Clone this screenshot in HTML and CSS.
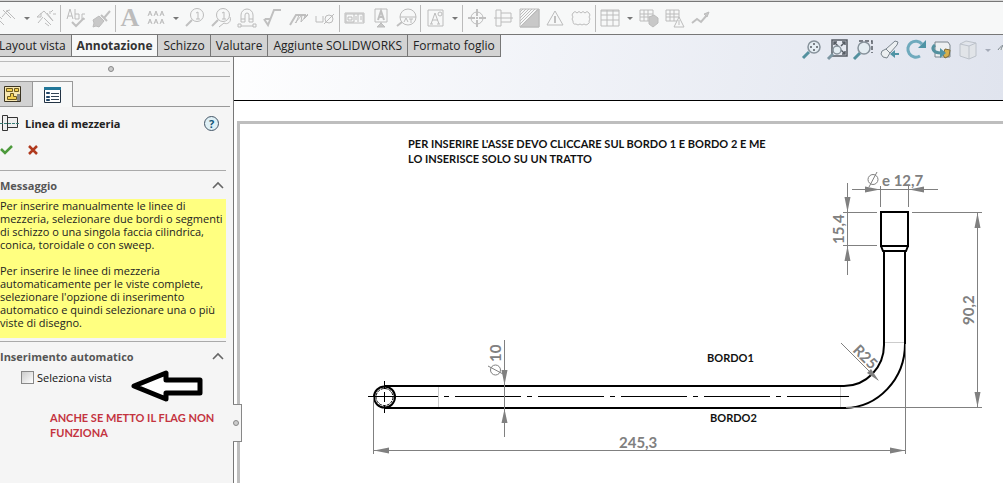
FILE: index.html
```html
<!DOCTYPE html>
<html lang="it">
<head>
<meta charset="utf-8">
<title>Linea di mezzeria</title>
<link rel="stylesheet" href="styles.css">
</head>
<body>
<header class="toolbar">
  <button class="tool" aria-label="Quota"><svg viewBox="0 0 26 26"><path d="M3 9l5 5M8 12l5-6 8 8M9 5l8 8M12 6l4-1M4 14l6 6"/></svg></button>
  <button class="more" aria-label="Altre quote"></button>
  <button class="tool" aria-label="Quota automatica"><svg viewBox="0 0 26 26"><path d="M4 12l7-6 9 10M4 12h4v-4M11 13l7 7M14 8l6 8M17 6v3M20 9h3M20 5l-2 2M10 12l-5 6M12 18l4 3"/></svg></button>
  <span class="sep"></span>
  <button class="tool" aria-label="Controllo ortografico"><svg viewBox="0 0 26 26"><path d="M5 14l3-10 3 10M6 11h4M13 4v10M13 9h4v5h-4M23 9h-3v5h3" /><path class="bold" d="M10 17l4 4 8-8"/></svg></button>
  <button class="tool" aria-label="Copia formato"><svg viewBox="0 0 26 26"><path class="fill" d="M5 15l6-4 5 5-5 6-3-1-3 1 1-4z"/><path class="bold" d="M13 10l6 6M16 13l6-7"/></svg></button>
  <span class="sep"></span>
  <button class="tool letter" aria-label="Nota">A</button>
  <button class="tool" aria-label="Serie di note"><svg viewBox="0 0 26 26"><path d="M5 11l2-5 2 5M6 9h2M11 11l2-5 2 5M12 9h2M17 11l2-5 2 5M18 9h2M5 19l2-5 2 5M6 17h2M11 19l2-5 2 5M12 17h2M17 19l2-5 2 5M18 17h2"/></svg></button>
  <button class="more" aria-label="Altre note"></button>
  <button class="tool" aria-label="Bollatura"><svg viewBox="0 0 26 26"><circle cx="15" cy="10" r="6.5"/><path d="M14 8l2-1v7M14 14h4"/><path class="bold" d="M10 15l-6 6"/></svg></button>
  <button class="tool" aria-label="Bollatura automatica"><svg viewBox="0 0 26 26"><circle cx="15" cy="10" r="6.5"/><path d="M14 8l2-1v7M14 14h4M22 12c2 5-3 8-6 6l-5 4"/><path class="bold" d="M10 15l-6 6"/></svg></button>
  <button class="tool" aria-label="Linea magnetica"><svg viewBox="0 0 26 26"><path d="M7 17V10a6 6 0 0 1 12 0v7h-4v-7a2 2 0 0 0-4 0v7zM7 14h4M15 14h4"/><path d="M7 21h12M4 19h3v3H4zM19 19h3v3h-3z"/></svg></button>
  <button class="tool" aria-label="Finitura superficie"><svg viewBox="0 0 26 26"><path class="bold" d="M4 14l4 6 6-15h7M5 14h5"/></svg></button>
  <button class="tool" aria-label="Saldatura"><svg viewBox="0 0 26 26"><path class="bold" d="M4 20l6-10h10"/><path d="M9 18l7-8-1 7 6-7 1-1M13 10l-3 8M19 10l-1 4 4-4"/></svg></button>
  <button class="tool" aria-label="Didascalia foro"><svg viewBox="0 0 26 26"><path d="M4 11v6h7v-6"/><circle cx="17" cy="14" r="4"/><path d="M12 19L22 9"/></svg></button>
  <span class="sep"></span>
  <button class="tool" aria-label="Tolleranza geometrica"><svg viewBox="0 0 26 26"><path d="M4 8h19v10H4zM5 9h8v8H5zM13 9h9v8M17 9v8M7 12h4v3H7zM15 11v4M20 11v4"/></svg></button>
  <button class="tool" aria-label="Riferimento"><svg viewBox="0 0 26 26"><path d="M8 4h12v13H8zM14 17v3"/><path class="bold" d="M11 15l3-9 3 9M12 12h4"/><path class="fill" d="M10 22l4-4 4 4z"/></svg></button>
  <button class="tool" aria-label="Riferimento destinazione"><svg viewBox="0 0 26 26"><circle cx="15" cy="12" r="8"/><path d="M7 12h16M11 17l2-4 2 4M16 14h4M18 14v4"/><path class="bold" d="M9 17l-5 4"/></svg></button>
  <span class="sep"></span>
  <button class="tool" aria-label="Blocco"><svg viewBox="0 0 26 26"><path d="M6 5h15v16H6zM9 19l4-11 4 11M10 15h6M8 19h3M15 19h3"/><circle cx="18" cy="9" r="2"/></svg></button>
  <button class="more" aria-label="Altri blocchi"></button>
  <span class="sep"></span>
  <button class="tool" aria-label="Centro"><svg viewBox="0 0 26 26"><circle cx="13" cy="13" r="6"/><path class="bold" d="M13 4v7M13 15v7M4 13h7M15 13h7M12 13h2"/></svg></button>
  <button class="tool" aria-label="Linea di mezzeria"><svg viewBox="0 0 26 26"><path d="M6 5h5v16H6zM11 8h10v9H11M4 13h19"/></svg></button>
  <button class="tool" aria-label="Tratteggio"><svg viewBox="0 0 26 26"><path class="fill" d="M4 22L23 4v18z"/><path d="M4 4h19v18H4zM4 7l3-3M4 10l6-6M4 13l9-9M4 16L16 4M4 19L19 4M4 22L22 4"/></svg></button>
  <button class="tool" aria-label="Revisione"><svg viewBox="0 0 26 26"><path d="M13 6l8 14H5z"/><path class="bold" d="M13 11v7"/></svg></button>
  <button class="tool" aria-label="Nuvola di revisione"><svg viewBox="0 0 26 26"><path d="M5 8q2-3 4 0q2-3 4 0q2-3 4 0q2-3 4 0q2 2 0 4q2 2 0 4q1 2-1 3q-2 2-4 0q-2 2-4 0q-2 2-4 0q-3 1-3-3q-2-2 0-4q-2-2 0-4z"/></svg></button>
  <span class="sep"></span>
  <button class="tool" aria-label="Tabella"><svg viewBox="0 0 26 26"><path d="M4 5h18v16H4zM4 10h18M4 15h18M10 5v16M16 5v16M4 6h18"/></svg></button>
  <button class="more" aria-label="Altre tabelle"></button>
  <button class="tool" aria-label="Tabella fori"><svg viewBox="0 0 26 26"><path d="M4 5h13v11H4zM4 9h13M4 12h13M8 5v11M12 5v11"/><path class="fill" d="M13 12l5-2 4 3v5l-5 4-4-3z"/></svg></button>
  <button class="tool" aria-label="Tabella revisioni"><svg viewBox="0 0 26 26"><path d="M4 5h13v11H4zM4 9h13M4 12h13M8 5v11M12 5v11"/><path class="cut" d="M17 12l5 10H12zM17 15v5"/></svg></button>
  <button class="tool" aria-label="Linea spezzata"><svg viewBox="0 0 26 26"><path class="bold" d="M4 18l5-4 4 3 6-7"/><path class="fill" d="M21 7l-5 2 3 3z"/></svg></button>
</header>

<div class="workspace">
  <div class="strip">
    <nav class="tabs">
      <button class="tab">Layout vista</button>
      <button class="tab active">Annotazione</button>
      <button class="tab">Schizzo</button>
      <button class="tab">Valutare</button>
      <button class="tab">Aggiunte SOLIDWORKS</button>
      <button class="tab">Formato foglio</button>
    </nav>
    <div class="headsup">
      <button class="view-tool" aria-label="Zoom in"><svg viewBox="0 0 26 26"><path class="teal" d="M10 15l-6 6"/><circle class="lens" cx="15" cy="10" r="6"/><path class="ink" d="M15 6v2M15 12v2M11 10h2M17 10h2"/></svg></button>
      <button class="view-tool" aria-label="Zoom adatta"><svg viewBox="0 0 26 26"><path class="ink" d="M7 3h15v16H7zM9 5l4 4M9 8V5h3M20 5l-4 4M17 5h3v3M20 17l-4-4M20 14v3h-3"/><path class="steel" d="M8 17l-5 5"/><circle class="lens" cx="12" cy="13" r="4"/></svg></button>
      <button class="view-tool" aria-label="Zoom area"><svg viewBox="0 0 26 26"><path class="ink dash" d="M8 4h13v12"/><path class="teal" d="M9 16l-6 6"/><circle class="lens" cx="13" cy="11" r="6"/></svg></button>
      <button class="view-tool" aria-label="Vista precedente"><svg viewBox="0 0 26 26"><path class="body" d="M5 14l4-2 9-8 3 1-1 3-7 8-3 5-4-1-2-3zM9 12l4 4"/><path class="teal-fill" d="M13 17l5-4v3h4v2h-4v3z"/></svg></button>
      <button class="view-tool" aria-label="Ruota vista"><svg viewBox="0 0 26 26"><path class="arc" d="M17 19a8 8 0 1 1 2-12"/><path class="teal-fill" d="M23 3v8h-8z"/></svg></button>
      <button class="view-tool" aria-label="Vista 3D"><svg viewBox="0 0 26 26"><path class="body" d="M6 5h13l2 3v12H6z"/><path class="gold" d="M16 12l5 1-1 6-4 2-2-3z"/><path class="teal" d="M6 8c-4 3-2 8 6 8"/><path class="teal-fill" d="M11 11l6 5-6 5z"/></svg></button>
      <button class="view-tool" aria-label="Stile di visualizzazione"><svg viewBox="0 0 26 26"><path class="cube" d="M5 7l6-3 10 2v13l-7 3-9-3zM5 7l9 2 7-3M14 9v13"/></svg></button>
      <button class="more pale" aria-label="Altri stili"></button>
      <button class="view-tool" aria-label="Nascondi"><svg viewBox="0 0 26 26"><path class="body" d="M4 13c4-7 12-7 16 0M7 13a5 5 0 0 1 10 0"/></svg></button>
    </div>
  </div>

  <div class="main">
    <aside class="panel">
      <div class="grip"><span class="dot"></span></div>
      <div class="panel-tabs">
        <button class="panel-tab" aria-label="Albero di disegno"><svg width="20" height="18" viewBox="0 0 20 18"><path class="tree" d="M1.500 1.500h16v15h-16z"/><path class="leaf" d="M3.500 3.500h6v3h-6zM11.500 3.500h4v3h-4zM7.500 8.500h3v3h3v3h-9v-3h3z"/><path d="M14 9h3v7h-3z" fill="#888"/></svg></button>
        <button class="panel-tab current" aria-label="Proprietà"><svg width="20" height="18" viewBox="0 0 20 18"><path d="M1.500 1.500h16v15h-16z" fill="#fff" stroke="#234" /><path d="M1 1h17v3H1z" fill="#279"/><path d="M3.500 6.500h3v1h-3zM3.500 10.500h3v1h-3zM3.500 13.500h3v1h-3z" fill="#3ac" stroke="#246"/><path d="M8 7.500h8M8 10.500h8M8 13.500h8" stroke="#345"/></svg></button>
      </div>
      <div class="title">
        <svg width="20" height="18" viewBox="0 0 20 18"><path d="M2.500 1.500h5v15h-5zM7.500 3.500h10v10h-10" fill="#eee" stroke="#333"/><path d="M0 9.500h19" stroke="#397c75" stroke-dasharray="3 1"/></svg>
        <h1>Linea di mezzeria</h1>
        <button class="help" aria-label="Guida">?</button>
      </div>
      <div class="actions">
        <button aria-label="OK"><svg width="14" height="12" viewBox="0 0 14 12"><path d="M1 5l4 4 7-7" fill="none" stroke="#4d9a3c" stroke-width="2.5"/></svg></button>
        <button aria-label="Annulla"><svg width="14" height="12" viewBox="0 0 14 12"><path d="M3 2l8 8M11 2l-8 8" fill="none" stroke="#b03a1e" stroke-width="2.5"/></svg></button>
      </div>
      <section class="group">
        <h2>Messaggio <button class="fold" aria-label="Comprimi messaggio"><svg width="12" height="8" viewBox="0 0 12 8"><path d="M1 7l5-5 5 5" fill="none" stroke="#666" stroke-width="1.6"/></svg></button></h2>
        <div class="message">
          <p>Per inserire manualmente le linee di<br>mezzeria, selezionare due bordi o segmenti<br>di schizzo o una singola faccia cilindrica,<br>conica, toroidale o con sweep.</p>
          <p>Per inserire le linee di mezzeria<br>automaticamente per le viste complete,<br>selezionare l'opzione di inserimento<br>automatico e quindi selezionare una o più<br>viste di disegno.</p>
        </div>
      </section>
      <section class="group">
        <h2>Inserimento automatico <button class="fold" aria-label="Comprimi inserimento"><svg width="12" height="8" viewBox="0 0 12 8"><path d="M1 7l5-5 5 5" fill="none" stroke="#666" stroke-width="1.6"/></svg></button></h2>
        <div class="option">
          <label><input type="checkbox"> Seleziona vista</label>
          <svg class="pointer" width="73" height="32" viewBox="0 0 73 32"><path d="M3 16L35 3v7h34v13H35v6z" fill="#fff" stroke="#000" stroke-width="5" stroke-linejoin="round"/></svg>
        </div>
        <p class="remark">ANCHE SE METTO IL FLAG NON<br>FUNZIONA</p>
      </section>
      <button class="handle" aria-label="Ridimensiona pannello"><span class="dot"></span></button>
    </aside>

    <main class="view">
      <div class="canvas">
        <div class="sheet">
          <svg class="drawing" width="763" height="359" viewBox="240 124 763 359">
            <g class="note">
              <text x="408" y="148">PER INSERIRE L'ASSE DEVO CLICCARE SUL BORDO 1 E BORDO 2 E ME</text>
              <text x="408" y="163">LO INSERISCE SOLO SU UN TRATTO</text>
              <text x="707" y="362">BORDO1</text>
              <text x="710" y="422">BORDO2</text>
            </g>
            <g class="tangent"><path d="M438.500 387v20M840.500 387v20M885 342.500h20"/></g>
            <g class="edge">
              <path d="M384 386H844A40 41 0 0 0 884 345V251M384 408H845A61 64 0 0 0 905 344V251"/>
              <path d="M881 212H908V246H881ZM881 246l2 5H906l2-5"/>
              <circle cx="384.500" cy="397" r="10.500"/>
            </g>
            <circle class="inner" cx="384.500" cy="397" r="8.500"/>
            <g class="axis">
              <path d="M368 396.500H395M384.500 381V389M384.500 392V402M384.500 405V413"/>
              <path stroke-dasharray="66 6 5 6" d="M372 396.500H849"/>
            </g>
            <g class="dim">
              <path d="M373.500 397V454M905.500 344V454M374 450.500H905"/>
              <path d="M504.500 340V437"/>
              <path d="M912 212.500H982M846 407.500H982M977.500 213V407"/>
              <path d="M843 212.500H877M843 245.500H877M847.500 183V275"/>
              <path d="M852 189.500H938M880.500 186V207M908.500 186V207"/>
              <path d="M841 343L878 380"/>
            </g>
            <g class="heads">
              <path d="M374 450.500l15-3v6zM905 450.500l-15-3v6zM504.500 385l-3-15h6zM504.500 409l-3 14h6zM977.500 213l-3 15h6zM977.500 407l-3-15h6zM847.500 212l-3-15h6zM847.500 246l-3 15h6zM880 189.500l-15-3v6zM909 189.500l15-3v6zM879 381l-12-8 4-4z"/>
            </g>
            <g class="value">
              <text x="619" y="448">245,3</text>
              <text x="882" y="186">e 12,7</text>
              <text transform="translate(844 244) rotate(-90)">15,4</text>
              <text transform="translate(974 325) rotate(-90)">90,2</text>
              <text transform="translate(501 362) rotate(-90)">10</text>
              <text transform="translate(852 351) rotate(45)">R25</text>
            </g>
            <g class="dim">
              <circle cx="873" cy="179.500" r="5"/><path d="M869 187l8-15"/>
              <circle cx="495.500" cy="370" r="5"/><path d="M488 366l15 8"/>
            </g>
          </svg>
        </div>
      </div>
    </main>
  </div>
</div>
</body>
</html>
```
FILE: styles.css
```css
* { box-sizing: border-box; }

body {
  margin: 0;
  padding-top: 1px;
  min-height: 100vh;
  display: flex;
  flex-direction: column;
  overflow: hidden;
  background: #d8d8d8;
  color: #222;
  font-family: "Open Sans", "Noto Sans", sans-serif;
  font-size: 12px;
}

button {
  border: 0;
  padding: 0;
  background: none;
  color: inherit;
  font: inherit;
}

svg { display: block; flex: none; }

.toolbar {
  display: flex;
  align-items: center;
  height: 34px;
  padding-right: 8px;
  margin-left: -6px;
  border-top: 1px solid #777;
  border-bottom: 1px solid #777;
  background: #f7f8f8;
}

.tool { flex: none; width: 26px; height: 26px; }

.tool path, .tool circle { fill: none; stroke: #bcbcbc; }
.tool .bold { stroke-width: 2; stroke: #c0c0c0; }
.tool .fill { fill: #c8c8c8; }
.tool .cut { fill: #f7f8f8; }

.letter {
  color: #bcbcbc;
  font: bold 26px/26px "Liberation Serif", serif;
}

.more { flex: none; width: 13px; height: 26px; }

.more::before {
  content: "";
  display: block;
  margin: 0 auto;
  width: 0;
  border: 3px solid transparent;
  border-top-color: #777;
  border-bottom: 0;
}

.pale::before { border-top-color: #a5abb8; }

.sep {
  flex: none;
  width: 1px;
  height: 27px;
  margin: 0 1px;
  background: #bbb;
}

.workspace {
  flex: 1;
  display: flex;
  flex-direction: column;
  background: linear-gradient(100deg, #fff 20%, #f1f3f8 55%, #e0e4ee 100%) top / 100% 66px no-repeat;
}

.strip {
  display: flex;
  justify-content: space-between;
  align-items: flex-start;
  height: 22px;
}

.tabs { display: flex; flex: none; margin-left: -6px; }

.tab {
  height: 22px;
  padding: 0 5px;
  border-right: 1px solid #777;
  border-bottom: 1px solid #777;
  background: #d3d3d3;
  line-height: 20px;
}

.active { background: #f7f8f8; font-weight: 700; color: #333; }

.headsup { display: flex; align-items: center; width: 204px; padding-top: 2px; overflow: hidden; }

.view-tool { flex: none; width: 26px; height: 26px; }

.view-tool svg { fill: none; }
.ink { stroke: #555b63; stroke-width: 1.5; }
.dash { stroke-dasharray: 4 2; }
.teal { stroke: #54919f; stroke-width: 3; }
.steel { stroke: #7d97a3; stroke-width: 3; }
.lens { fill: #e3edf2; fill-opacity: .8; stroke: #87929b; stroke-width: 1.5; }
.teal-fill { fill: #4f94a5; }
.body { fill: #eceff1; stroke: #7b858d; }
.arc { stroke: #6faabd; stroke-width: 3; }
.gold { fill: #d6b04c; stroke: #7c6a3b; }
.cube { fill: #e1e4e8; stroke: #bcc2ca; }

.main { flex: 1; display: flex; }

.panel {
  position: relative;
  flex: none;
  width: 234px;
  border-right: 1px solid #777;
  background: #f5f5f5;
}

.grip {
  display: flex;
  justify-content: center;
  align-items: center;
  height: 16px;
  margin: 4px 3px 4px 0;
  padding-right: 8px;
  border-top: 1px solid #bbb;
  border-bottom: 1px solid #aaa;
}

.dot {
  display: block;
  width: 6px;
  height: 6px;
  border: 1px solid #888;
  border-radius: 50%;
  background: #ccc;
}

.panel-tabs { display: flex; height: 26px; margin-right: 3px; border-bottom: 1px solid #999; }

.panel-tab {
  display: flex;
  align-items: center;
  width: 33px;
  height: 25px;
  padding-left: 3px;
  border-top: 1px solid #999;
  border-right: 1px solid #999;
  background: #d2d2d2;
}

.current { width: 40px; height: 26px; padding-left: 10px; background: #f7f8f8; }

.tree { fill: #f7e7b0; stroke: #3b3422; }
.leaf { fill: #f3cf51; stroke: #6d5a20; }

.title { display: flex; align-items: center; height: 32px; padding-right: 14px; }

h1 { flex: 1; margin: 0 0 0 5px; font-size: 11px; font-weight: 700; }

.help {
  width: 15px;
  height: 15px;
  border: 1px solid #456;
  border-radius: 50%;
  background: #dff0f6;
  color: #157;
  font-size: 11px;
  font-weight: 700;
  line-height: 13px;
}

.actions { display: flex; gap: 12px; height: 31px; padding-top: 4px; }

.actions button { height: 14px; }

.group { margin-right: 7px; border-top: 1px solid #aaa; }

h2 {
  display: flex;
  justify-content: space-between;
  align-items: center;
  height: 28px;
  margin: 0;
  padding-right: 2px;
  color: #555;
  font-size: 11px;
  font-weight: 700;
}

.message {
  margin-bottom: 3px;
  padding-bottom: 9px;
  background: #ffff80;
  font-size: 11px;
  line-height: 13px;
  white-space: nowrap;
}

.message p { margin: 0 0 13px; }
.message p:last-child { margin: 0; }

.option { display: flex; justify-content: space-between; height: 40px; padding: 0 22px 0 21px; }

label { display: flex; align-items: center; gap: 3px; height: 14px; font-size: 11px; color: #111; }

input {
  appearance: none;
  width: 13px;
  height: 13px;
  margin: 0;
  border: 1px solid #888;
  background: linear-gradient(135deg, #ccc, #fff);
}

.remark {
  margin: 0 0 0 50px;
  color: #c4343f;
  font: bold 11px/15px Lato, sans-serif;
  white-space: nowrap;
}

.handle {
  position: absolute;
  top: 347px;
  right: -9px;
  z-index: 1;
  width: 9px;
  height: 38px;
  border: 1px solid #888;
  border-left: 0;
  background: #f5f5f5;
}

.view { flex: 1; min-width: 0; display: flex; flex-direction: column; padding-top: 43px; }

.canvas {
  flex: 1;
  display: flex;
  padding: 20px 0 0 3px;
  border-top: 1px solid #000;
  background: #fff;
}

.sheet {
  flex: 1;
  min-width: 0;
  overflow: hidden;
  border-top: 3px solid #bebebe;
  border-left: 3px solid #bebebe;
}

.drawing { fill: none; }

.note { fill: #111; font: bold 11px Lato, sans-serif; }
.edge { stroke: #000; stroke-width: 2; }
.inner { stroke: #000; stroke-dasharray: 3 1; }
.axis { stroke: #000; }
.tangent { stroke: #ccc; }
.dim { stroke: #808080; }
.heads { fill: #808080; }
.value { fill: #808080; font: bold 15px Lato, sans-serif; }
```
